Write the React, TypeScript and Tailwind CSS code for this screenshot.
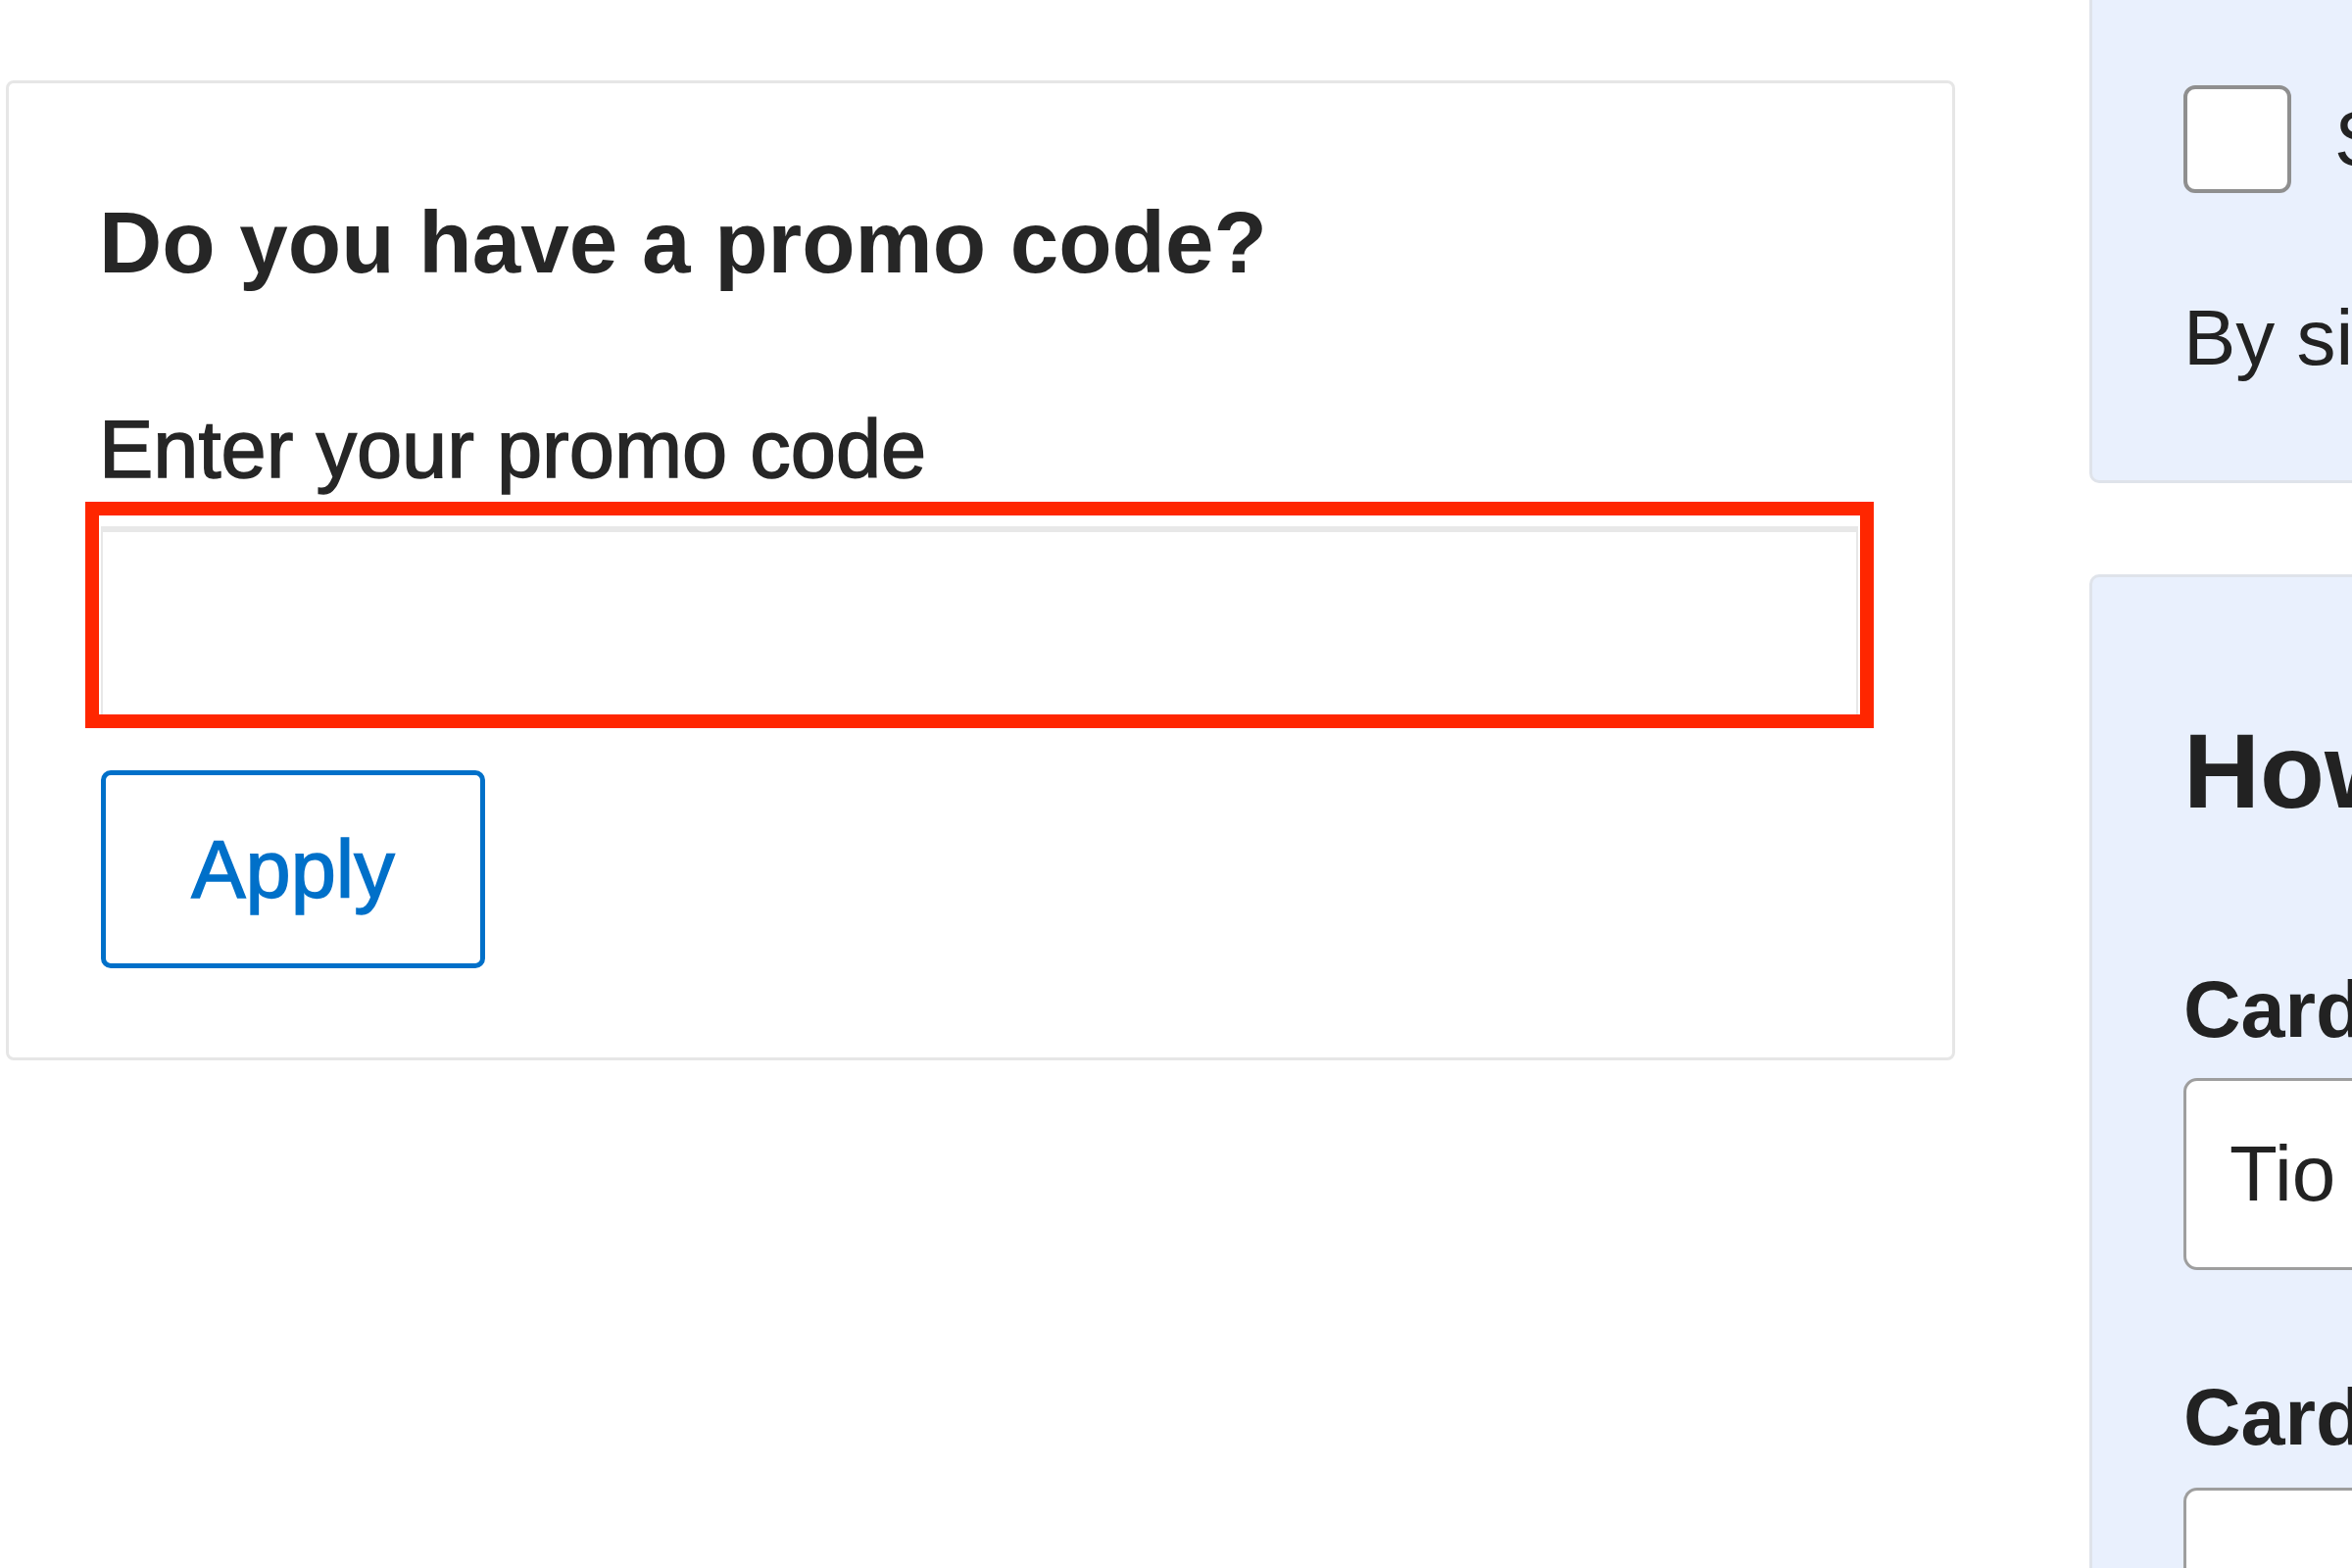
import React from "react";

export default function App() {
  return (
    <div className="w-[2400px] h-[1600px] overflow-hidden bg-white flex items-start font-['Liberation_Sans',Arial,sans-serif] text-[#262626]">
      {/* Left promo card */}
      <div className="ml-[6px] mt-[82px] w-[1989px] h-[1000px] shrink-0 border-[3px] border-[#e6e6e6] rounded-[8px] pl-[92px] pr-[92px] pt-[118px]">
        <h2 className="text-[89px] font-bold leading-none">Do you have a promo code?</h2>
        <label className="block mt-[125px] text-[83px] leading-none [-webkit-text-stroke:1.5px_#262626]">Enter your promo code</label>
        <div className="mt-[12px] -ml-[14px] -mr-[12px] h-[231px] border-[14px] border-[#ff2600]">
          <div className="mt-[11px] mx-[2px] h-[192px] border-t-[6px] border-x-2 border-[#e8e8e8] bg-white">
            <input className="block w-full h-full bg-transparent outline-none" aria-label="promo code" />
          </div>
        </div>
        <button className="mt-[43px] ml-[2px] w-[392px] h-[202px] border-[5px] border-[#0070c9] rounded-[10px] text-[83px] leading-none text-[#0070c9] bg-white flex items-center justify-center [-webkit-text-stroke:1.5px_#0070c9]">
          Apply
        </button>
      </div>

      {/* Right column */}
      <div className="ml-[137px] w-[700px] shrink-0 flex flex-col text-[#222]">
        <div className="-mt-[20px] border-[3px] border-[#dfe3ea] bg-[#e9f0fd] rounded-[10px] pl-[93px] pt-[104px] pb-[105px]">
          <div className="flex items-center gap-[44px]">
            <div className="w-[110px] h-[110px] shrink-0 rounded-[12px] border-[4px] border-[#8f8f8f] bg-white" />
            <span className="text-[80px] leading-none whitespace-nowrap">Sign me up</span>
          </div>
          <p className="mt-[108px] text-[80px] leading-none whitespace-nowrap">By signing up</p>
        </div>
        <div className="mt-[93px] h-[1100px] border-[3px] border-[#dfe3ea] bg-[#e9f0fd] rounded-[10px] pl-[93px] pt-[144px]">
          <h3 className="text-[108px] font-bold leading-none whitespace-nowrap">How would you like to pay?</h3>
          <div className="mt-[149px] text-[81px] font-bold leading-none whitespace-nowrap">Cardholder name</div>
          <div className="mt-[29px] w-[700px] h-[196px] border-[3px] border-[#9e9e9e] rounded-[14px] bg-white pl-[44px] flex items-center text-[80px] leading-none whitespace-nowrap">
            Tio Smith
          </div>
          <div className="mt-[110px] text-[81px] font-bold leading-none whitespace-nowrap">Card number</div>
          <div className="mt-[31px] w-[700px] h-[196px] border-[3px] border-[#9e9e9e] rounded-[14px] bg-white" />
        </div>
      </div>
    </div>
  );
}
